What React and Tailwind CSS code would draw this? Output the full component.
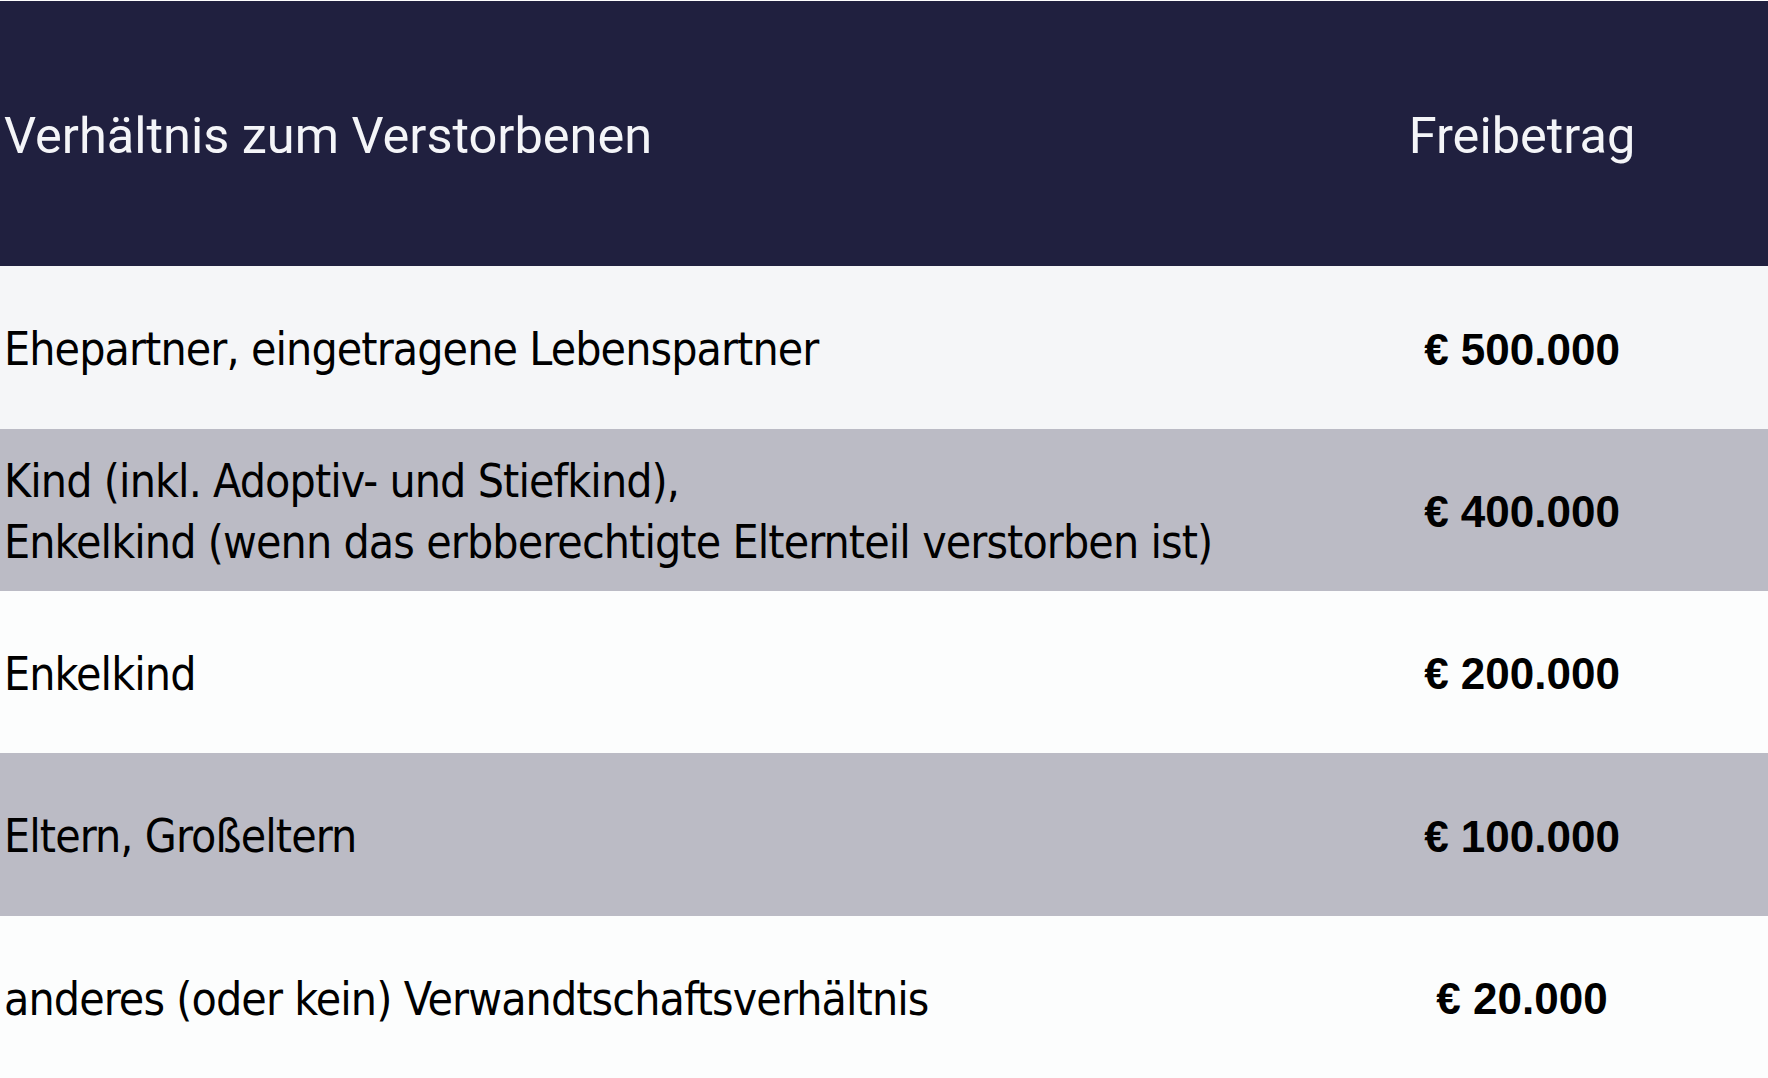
import React from 'react';

const rows = [
  { label: ['Ehepartner, eingetragene Lebenspartner'], amount: '€ 500.000', bg: 'bg-[#f5f6f8]', h: 'h-[163px]' },
  {
    label: ['Kind (inkl. Adoptiv- und Stiefkind),', 'Enkelkind (wenn das erbberechtigte Elternteil verstorben ist)'],
    amount: '€ 400.000',
    bg: 'bg-[#bbbbc5]',
    h: 'h-[162px]',
  },
  { label: ['Enkelkind'], amount: '€ 200.000', bg: 'bg-[#fcfdfd]', h: 'h-[162px]' },
  { label: ['Eltern, Großeltern'], amount: '€ 100.000', bg: 'bg-[#bbbbc5]', h: 'h-[163px]' },
  { label: ['anderes (oder kein) Verwandtschaftsverhältnis'], amount: '€ 20.000', bg: 'bg-[#fcfdfd]', h: 'h-[162px]' },
];

const App = () => {
  return (
    <div className="w-[1768px] h-[1078px] bg-white pt-px overflow-hidden">
      <div className="grid grid-cols-[1fr_492px] h-[265px] pt-1 bg-[#20203f] text-[#f4f5f8] font-['Roboto',sans-serif] text-[50.5px]">
        <div className="flex items-center pl-1">Verhältnis zum Verstorbenen</div>
        <div className="flex items-center justify-center">Freibetrag</div>
      </div>
      {rows.map((row) => (
        <div key={row.amount} className={`grid grid-cols-[1fr_492px] pt-1 ${row.bg} ${row.h} text-black`}>
          <div className="flex flex-col justify-center pl-1 font-['DejaVu_Sans_Condensed',sans-serif] text-[46px] leading-[61px] tracking-[-0.9px]">
            {row.label.map((line) => (
              <span key={line}>{line}</span>
            ))}
          </div>
          <div className="flex items-center justify-center font-['Liberation_Sans',sans-serif] font-bold text-[44px]">
            {row.amount}
          </div>
        </div>
      ))}
    </div>
  );
};

export default App;
